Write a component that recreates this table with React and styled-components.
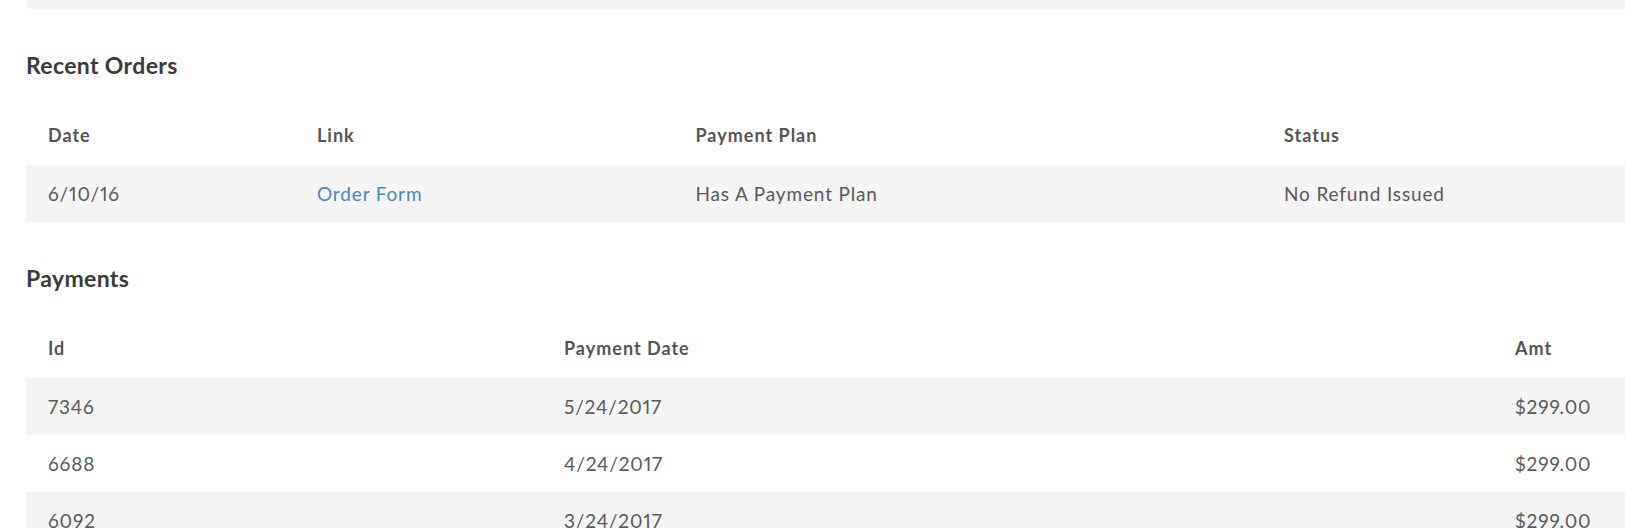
import React from "react";
import styled, { createGlobalStyle } from "styled-components";

const GlobalStyle = createGlobalStyle`
  html, body { margin: 0; padding: 0; background: #ffffff; }
  body { font-family: Lato, "Open Sans", "Liberation Sans", sans-serif; color: #555555; overflow: hidden; }
`;

const Page = styled.div`
  width: 1625px;
  height: 528px;
  overflow: hidden;
  padding-left: 26px;
  box-sizing: border-box;
`;

const TopCard = styled.div`
  height: 9px;
  margin-left: 1px;
  background: #f3f3f3;
  border-bottom-left-radius: 5px;
`;

const Section = styled.section`
  margin-top: 43px;
`;

const Heading = styled.h2`
  margin: 0 0 30px 0;
  font-size: 23px;
  line-height: 26px;
  font-weight: 700;
  color: #3b3b3b;
  letter-spacing: 0.35px;
`;

const Table = styled.div`
  display: grid;
  grid-template-columns: ${(p) => p.$cols};
`;

const Cell = styled.div`
  height: 57px;
  display: flex;
  align-items: center;
  padding: ${(p) => (p.$head ? "0 0 3px 22px" : "0 0 0 22px")};
  box-sizing: border-box;
  white-space: nowrap;
  font-variant-numeric: proportional-nums;
  font-size: ${(p) => (p.$head ? "18px" : "19px")};
  font-weight: ${(p) => (p.$head ? 700 : 400)};
  letter-spacing: ${(p) => (p.$head ? "1px" : "0.85px")};
  color: ${(p) => (p.$head ? "#555555" : "#5a5a5a")};
  background: ${(p) => (p.$shaded ? "#f4f4f4" : "transparent")};
`;

const Link = styled.a`
  color: #4a89bd;
  text-decoration: none;
`;

function DataTable({ cols, headers, rows }) {
  return (
    <Table $cols={cols}>
      {headers.map((h) => (
        <Cell key={h} $head>
          {h}
        </Cell>
      ))}
      {rows.map((row, ri) =>
        row.map((c, ci) => (
          <Cell key={`${ri}-${ci}`} $shaded={ri % 2 === 0}>
            {c}
          </Cell>
        ))
      )}
    </Table>
  );
}

export default function App() {
  return (
    <>
      <GlobalStyle />
      <Page>
        <TopCard />
        <Section>
          <Heading>Recent Orders</Heading>
          <DataTable
            cols="269px 378.5px 588.5px 1fr"
            headers={["Date", "Link", "Payment Plan", "Status"]}
            rows={[
              [
                "6/10/16",
                <Link href="#" key="l">Order Form</Link>,
                "Has A Payment Plan",
                "No Refund Issued",
              ],
            ]}
          />
        </Section>
        <Section>
          <Heading>Payments</Heading>
          <DataTable
            cols="516px 951px 1fr"
            headers={["Id", "Payment Date", "Amt"]}
            rows={[
              ["7346", "5/24/2017", "$299.00"],
              ["6688", "4/24/2017", "$299.00"],
              ["6092", "3/24/2017", "$299.00"],
            ]}
          />
        </Section>
      </Page>
    </>
  );
}
